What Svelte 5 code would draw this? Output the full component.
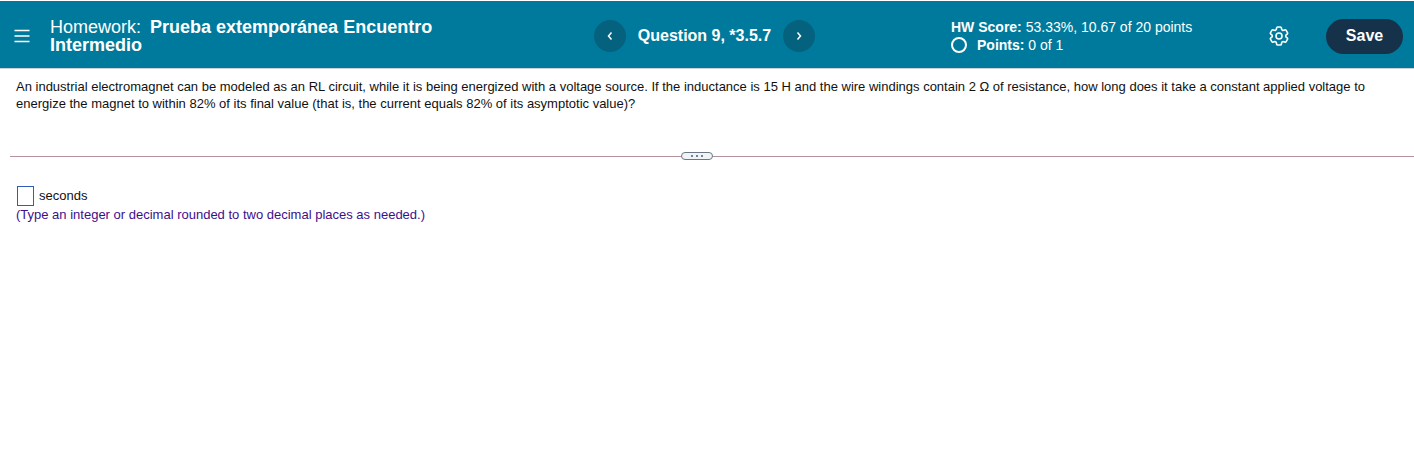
<script>
  const title = 'Prueba extemporánea Encuentro Intermedio';
</script>

<div class="page">
  <header class="bar">
    <button class="menu" aria-label="Menu">
      <svg width="16" height="14" viewBox="0 0 16 14"><path d="M0.500 1.500h15M0.500 7h15M0.500 12.500h15" stroke="#fff" stroke-width="1.500" fill="none"/></svg>
    </button>
    <div class="title"><span class="hw">Homework:</span>&nbsp; <b>{title}</b></div>
    <nav class="nav">
      <button class="round" aria-label="Previous"><svg width="8" height="10" viewBox="0 0 8 10"><path d="M5.500 1.500 2.500 5l3 3.500" stroke="#fff" stroke-width="1.500" fill="none"/></svg></button>
      <span class="q">Question 9, *3.5.7</span>
      <button class="round" aria-label="Next"><svg width="8" height="10" viewBox="0 0 8 10"><path d="M2.500 1.500 5.500 5l-3 3.500" stroke="#fff" stroke-width="1.500" fill="none"/></svg></button>
    </nav>
    <div class="score">
      <div class="l1"><b>HW Score:</b> 53.33%, 10.67 of 20 points</div>
      <div class="l2"><span class="ring"></span><span><b>Points:</b> 0 of 1</span></div>
    </div>
    <button class="gear" aria-label="Settings">
      <svg width="24" height="24" viewBox="0 0 24 24" fill="none" stroke="#fff" stroke-width="1.600" stroke-linejoin="round"><circle cx="12" cy="12" r="3"/><path d="M9.594 3.940c.09-.542.56-.94 1.110-.94h2.593c.55 0 1.020.398 1.110.94l.213 1.281c.063.374.313.686.645.87.074.04.147.083.22.127.324.196.72.257 1.075.124l1.217-.456a1.125 1.125 0 0 1 1.370.49l1.296 2.247a1.125 1.125 0 0 1-.26 1.431l-1.003.827c-.293.24-.438.613-.431.992a6.759 6.759 0 0 1 0 .255c-.007.378.138.75.43.99l1.005.828c.424.35.534.954.26 1.430l-1.298 2.247a1.125 1.125 0 0 1-1.369.491l-1.217-.456c-.355-.133-.75-.072-1.076.124a6.570 6.570 0 0 1-.22.128c-.331.183-.581.495-.644.869l-.213 1.280c-.09.543-.56.941-1.110.941h-2.594c-.55 0-1.020-.398-1.110-.94l-.213-1.281c-.062-.374-.312-.686-.644-.87a6.520 6.520 0 0 1-.22-.127c-.325-.196-.72-.257-1.076-.124l-1.217.456a1.125 1.125 0 0 1-1.369-.49l-1.297-2.247a1.125 1.125 0 0 1 .26-1.431l1.004-.827c.292-.24.437-.613.43-.992a6.932 6.932 0 0 1 0-.255c.007-.378-.138-.75-.43-.99l-1.004-.828a1.125 1.125 0 0 1-.26-1.430l1.297-2.247a1.125 1.125 0 0 1 1.370-.491l1.216.456c.356.133.751.072 1.076-.124.072-.044.146-.087.22-.128.332-.183.582-.495.644-.869l.214-1.281z"/></svg>
    </button>
    <button class="save">Save</button>
  </header>

  <p class="question">An industrial electromagnet can be modeled as an RL circuit, while it is being energized with a voltage source. If the inductance is 15 H and the wire windings contain 2 Ω of resistance, how long does it take a constant applied voltage to energize the magnet to within 82% of its final value (that is, the current equals 82% of its asymptotic value)?</p>

  <div class="divider"><span class="pill"><i></i><i></i><i></i></span></div>

  <div class="answer">
    <div class="row"><span class="box"></span><span class="unit">seconds</span></div>
    <div class="hint">(Type an integer or decimal rounded to two decimal places as needed.)</div>
  </div>
</div>

<style>
  :global(body) { margin: 0; background: #fff; }
  .page { font-family: "Liberation Sans", Arial, sans-serif; font-size: 13px; color: #111; width: 1414px; height: 457px; overflow: hidden; }
  button { border: 0; padding: 0; background: none; font: inherit; color: inherit; display: flex; align-items: center; justify-content: center; }
  .bar { margin-top: 1px; height: 68px; box-sizing: border-box; padding-top: 3px; background: #007a9c; border-bottom: 1px solid #c9d3d8; color: #fff; display: flex; align-items: center; position: relative; }
  .menu { width: 16px; height: 14px; margin-left: 14px; }
  .title { width: 400px; margin-left: 20px; font-size: 18px; line-height: 18px; }
  .hw { margin-right: -1px; }
  .title b { font-weight: 700; }
  .nav { display: flex; align-items: center; margin-left: 144px; }
  .round { width: 32px; height: 32px; border-radius: 50%; background: #05627f; }
  .q { font-weight: 700; font-size: 16px; width: 157px; text-align: center; }
  .score { margin-left: 136px; width: 316px; font-size: 14px; line-height: 18px; }
  .l2 { display: flex; align-items: center; }
  .ring { width: 12px; height: 12px; border: 2px solid #fff; border-radius: 50%; margin-right: 10px; }
  .gear { width: 24px; height: 24px; margin-right: 35px; }
  .save { width: 77px; height: 35px; border-radius: 18px; background: #16324a; font-weight: 700; font-size: 16px; }
  .question { margin: 0; padding: 9px 16px 0; line-height: 17px; height: 77px; box-sizing: border-box; }
  .divider { margin-left: 10px; height: 1px; margin-top: 10px; background: #b5929f; position: relative; display: flex; justify-content: center; }
  .pill { position: absolute; left: 671px; top: -4px; width: 30px; height: 6px; border: 1.500px solid #6b7785; border-radius: 5px; background: #f1f4f6; display: flex; align-items: center; justify-content: center; gap: 3px; }
  .pill i { width: 2px; height: 2px; background: #505c68; border-radius: 50%; }
  .answer { margin: 29px 0 0 16px; }
  .row { display: flex; align-items: center; gap: 5px; height: 20px; }
  .unit { margin-top: -2px; }
  .box { width: 15px; height: 18px; border: 1px solid #2f5fb5; margin-left: 1px; }
  .hint { color: #3c0f8c; margin-top: 0; line-height: 17px; }
</style>
